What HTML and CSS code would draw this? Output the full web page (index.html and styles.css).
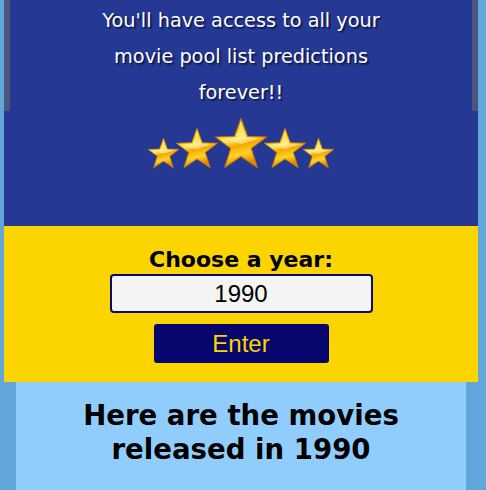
FILE: index.html
```html
<!DOCTYPE html>
<html>
<head>
<meta charset="utf-8">
<link rel="stylesheet" href="styles.css">
</head>
<body>
<div class="card">
  <section class="hero">
    <div class="hero-text">
      <p>You'll have access to all your<br>movie pool list predictions<br>forever!!</p>
    </div>
    <div class="stars">
      <svg class="star s-sm" viewBox="0 0 100 96"><use href="#st"/></svg>
      <svg class="star s-md" viewBox="0 0 100 96"><use href="#st"/></svg>
      <svg class="star s-lg" viewBox="0 0 100 96"><use href="#st"/></svg>
      <svg class="star s-md" viewBox="0 0 100 96"><use href="#st"/></svg>
      <svg class="star s-sm" viewBox="0 0 100 96"><use href="#st"/></svg>
    </div>
  </section>
  <section class="picker">
    <label class="label" for="year">Choose a year:</label>
    <input id="year" class="year" type="text" value="1990">
    <button class="enter">Enter</button>
  </section>
</div>
<section class="results">
  <h2>Here are the movies<br>released in 1990</h2>
</section>
<svg width="0" height="0" class="defs">
  <defs>
    <linearGradient id="gold" x1="0" y1="0" x2="0.25" y2="1">
      <stop offset="0" stop-color="#fff8b0"/>
      <stop offset="0.3" stop-color="#ffd21a"/>
      <stop offset="0.5" stop-color="#ffe66a"/>
      <stop offset="0.62" stop-color="#f5a800"/>
      <stop offset="0.8" stop-color="#ffd22a"/>
      <stop offset="1" stop-color="#e08a00"/>
    </linearGradient>
    <g id="st">
      <polygon points="50,3 62,36 97,37 69,58 80,93 50,73 20,93 31,58 3,37 38,36" fill="url(#gold)" stroke="#c87a00" stroke-width="2" stroke-linejoin="round"/>
      <polygon points="50,12 58,38 84,40 50,50 16,40 42,38" fill="#fff6b8" opacity="0.45"/>
    </g>
  </defs>
</svg>
</body>
</html>
```
FILE: styles.css
```css
html, body {
  margin: 0;
  padding: 0;
}
body {
  background: #62a6dc;
  font-family: "DejaVu Sans", "Liberation Sans", sans-serif;
}
.card {
  margin: 0 8px 0 4px;
}
.hero {
  background: #243894;
  height: 226px;
  display: flex;
  flex-direction: column;
  align-items: stretch;
}
.hero-text {
  border-left: 6px solid #4b5580;
  border-right: 6px solid #4b5580;
  padding-top: 3px;
}
.hero-text p {
  margin: 0;
  color: #ffffff;
  text-align: center;
  font-size: 19.3px;
  line-height: 36px;
  text-shadow: 1px 1px 0 #111a55, 2px 2px 1px rgba(0,0,0,0.4);
}
.stars {
  display: flex;
  justify-content: center;
  align-items: flex-end;
  margin-top: 6px;
  height: 52px;
}
.star {
  display: block;
  margin: 0 -2.5px;
}
.s-sm { width: 33px; height: 32px; }
.s-md { width: 44px; height: 42px; }
.s-lg { width: 54px; height: 52px; }
.picker {
  background: #fcd400;
  height: 156px;
  box-sizing: border-box;
  padding-top: 20px;
  display: flex;
  flex-direction: column;
  align-items: center;
}
.label {
  font-weight: bold;
  font-size: 22px;
  line-height: 28px;
  color: #000;
}
.year {
  margin-top: 0;
  width: 263px;
  height: 39px;
  box-sizing: border-box;
  border: 2px solid #0a0a70;
  border-radius: 4px;
  background: #f4f4f4;
  text-align: center;
  font-family: "Liberation Sans", Arial, sans-serif;
  font-size: 24px;
  color: #000;
  padding: 0;
}
.enter {
  margin-top: 11px;
  width: 175px;
  height: 39px;
  border: none;
  border-radius: 3px;
  background: #07066e;
  color: #fcd400;
  font-family: "Liberation Sans", Arial, sans-serif;
  font-size: 24px;
  padding: 0;
}
.results {
  background: #90cdfd;
  margin: 0 20px 0 16px;
  height: 108px;
  padding-top: 17px;
}
.results h2 {
  margin: 0;
  text-align: center;
  font-size: 27.6px;
  line-height: 34px;
  font-weight: bold;
  color: #000;
}
.defs {
  position: absolute;
}
```
